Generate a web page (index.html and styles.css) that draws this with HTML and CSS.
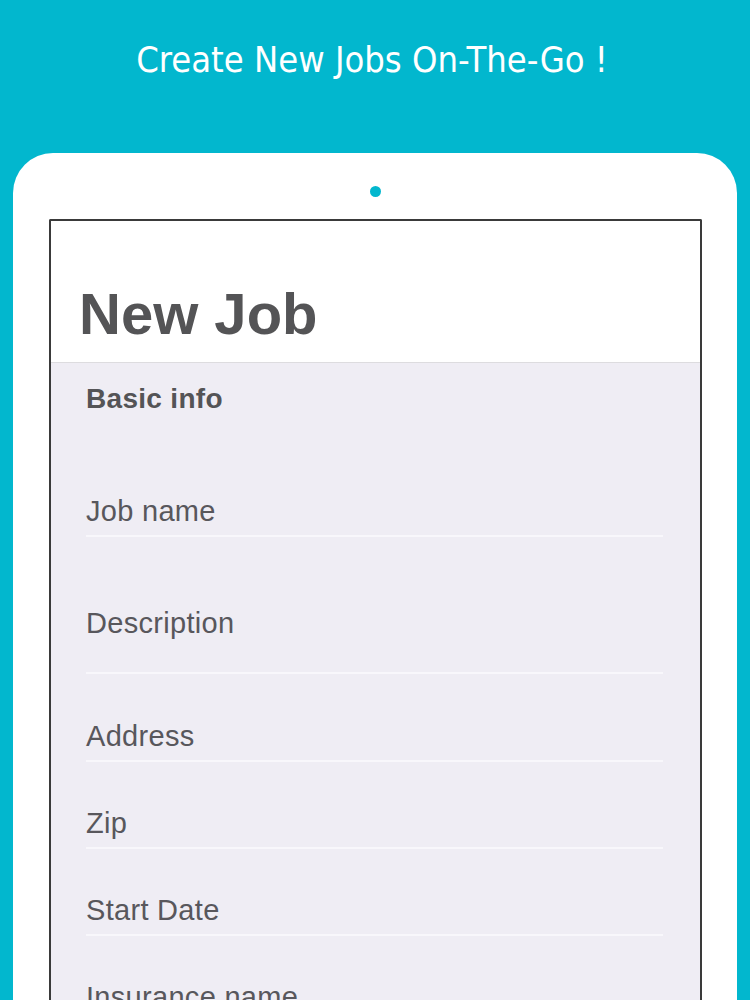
FILE: index.html
```html
<!DOCTYPE html>
<html>
<head>
<meta charset="utf-8">
<link rel="stylesheet" href="styles.css">
</head>
<body>
<h1 class="headline">Create New Jobs On-The-Go !</h1>
<div class="tablet">
  <div class="camera"></div>
  <div class="screen">
    <div class="navbar"><h2 class="nav-title">New Job</h2></div>
    <div class="form">
      <div class="section-title">Basic info</div>
      <div class="field field-first"><span class="label">Job name</span></div>
      <div class="field field-tall"><span class="label">Description</span></div>
      <div class="field field-address"><span class="label">Address</span></div>
      <div class="field"><span class="label">Zip</span></div>
      <div class="field"><span class="label">Start Date</span></div>
      <div class="field"><span class="label">Insurance name</span></div>
    </div>
  </div>
</div>
</body>
</html>
```
FILE: styles.css
```css
html, body {
  margin: 0;
  padding: 0;
}
body {
  background: #02b7ce;
  height: 1000px;
  overflow: hidden;
  font-family: "Liberation Sans", Arial, sans-serif;
}
.headline {
  margin: 0;
  padding-top: 39px;
  padding-right: 6px;
  height: 153px;
  box-sizing: border-box;
  text-align: center;
  color: #ffffff;
  font-family: "DejaVu Sans Condensed", "DejaVu Sans", sans-serif;
  font-weight: normal;
  font-size: 36px;
  line-height: 42px;
}
.tablet {
  margin: 0 13px;
  background: #ffffff;
  border-radius: 40px 40px 0 0;
  padding-top: 33px;
  height: 880px;
}
.camera {
  width: 11px;
  height: 11px;
  border-radius: 50%;
  background: #02b7ce;
  margin: 0 auto;
}
.screen {
  margin: 22px 35px 0 36px;
  border: 2px solid #3a3a3a;
  border-bottom: none;
  border-radius: 2px 2px 0 0;
  height: 820px;
  background: #efedf4;
}
.navbar {
  background: #ffffff;
  height: 142px;
  box-sizing: border-box;
  padding: 64px 0 0 28px;
  border-bottom: 1px solid #dddcdf;
}
.nav-title {
  margin: 0;
  font-size: 58px;
  line-height: 58px;
  font-weight: bold;
  color: #545456;
}
.form {
  padding: 20px 37px 0 35px;
}
.section-title {
  font-size: 28px;
  line-height: 32px;
  font-weight: bold;
  letter-spacing: 0.3px;
  color: #545456;
}
.field {
  padding: 45px 0 8px 0;
  border-bottom: 2px solid #f8f7fb;
}
.field-first {
  padding-top: 80px;
}
.field-tall {
  padding-top: 70px;
  padding-bottom: 33px;
}
.field-address {
  padding-top: 46px;
}
.label {
  display: block;
  font-size: 29px;
  line-height: 32px;
  letter-spacing: 0.3px;
  color: #58575c;
}
```
